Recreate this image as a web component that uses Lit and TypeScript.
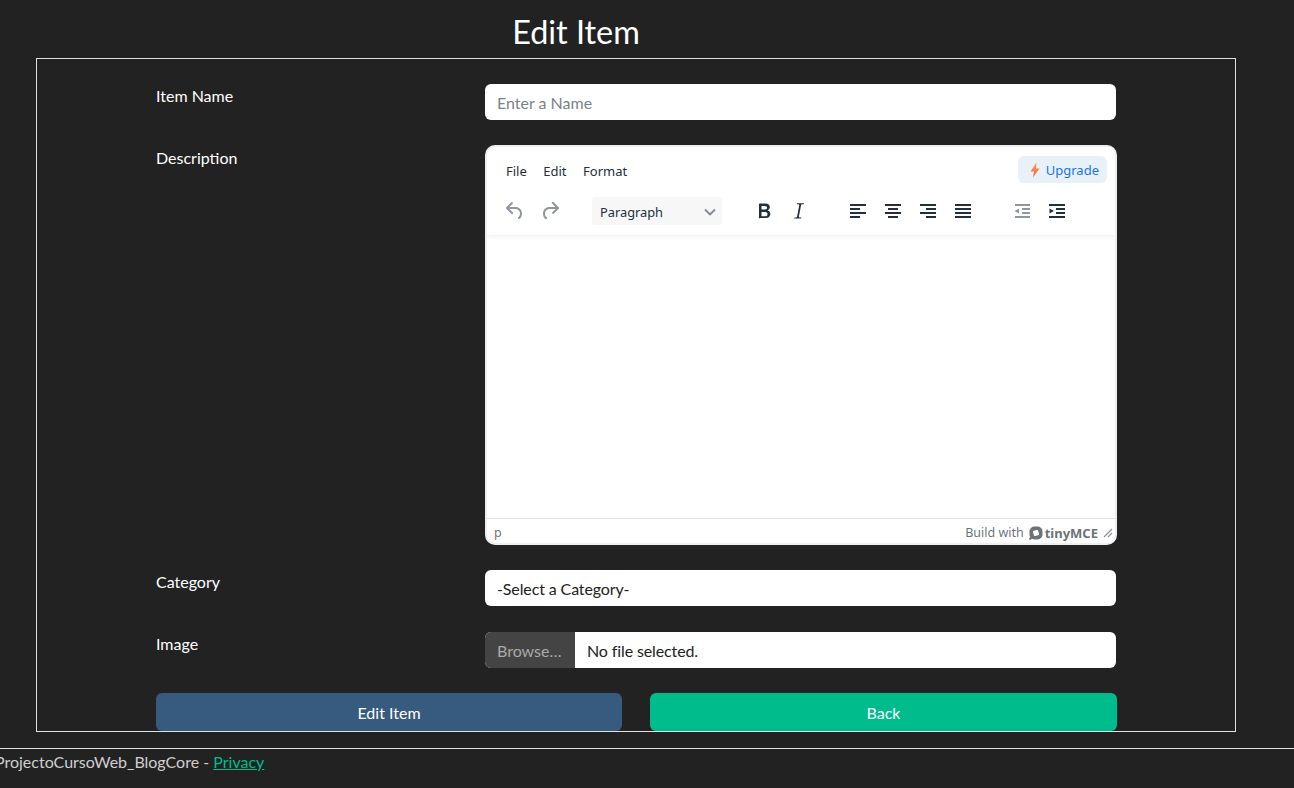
import { LitElement, html, css } from 'lit';
import { customElement } from 'lit/decorators.js';

const fontStack = css`Lato, 'Liberation Sans', sans-serif`;

@customElement('tiny-editor')
export class TinyEditor extends LitElement {
	static styles = css`
		:host {
			display: flex;
			flex-direction: column;
			height: 400px;
			margin-right: -1px;
			box-sizing: border-box;
			background: #fff;
			border: 2px solid #eee;
			border-radius: 10px;
			overflow: hidden;
			font-family: 'Noto Sans', sans-serif;
			color: #222f3e;
		}
		.header {
			display: flex;
			flex-direction: column;
			height: 88px;
			flex: none;
			box-sizing: border-box;
			box-shadow: 0 2px 4px rgba(34, 47, 62, 0.08);
			position: relative;
		}
		.menubar {
			display: flex;
			align-items: center;
			height: 48px;
			margin-bottom: 1px;
			padding: 0 8px 0 19px;
			gap: 16.5px;
			font-size: 13px;
		}
		.spacer {
			flex: 1;
		}
		.upgrade {
			display: flex;
			align-items: center;
			gap: 5px;
			height: 27px;
			margin-top: -3px;
			padding: 0 8px 0 11px;
			background: #e8f1f8;
			border-radius: 6px;
			color: #1a73e8;
			font-size: 13px;
		}
		.toolbar {
			display: flex;
			align-items: center;
			height: 30px;
			padding-left: 10px;
		}
		.tool {
			display: flex;
			width: 35px;
			justify-content: center;
			flex: none;
		}
		.tool svg {
			display: block;
			width: 24px;
			height: 24px;
		}
		.disabled {
			opacity: 0.5;
		}
		.select {
			display: flex;
			align-items: center;
			justify-content: space-between;
			box-sizing: border-box;
			width: 130px;
			height: 28px;
			margin: 0 24px 0 25px;
			padding: 1px 5px 0 8px;
			background: #f7f7f8;
			border-radius: 3px;
			font-size: 12.8px;
		}
		.group-gap {
			width: 24px;
			flex: none;
		}
		.content {
			flex: 1;
		}
		.status {
			display: flex;
			align-items: center;
			height: 25px;
			flex: none;
			box-sizing: border-box;
			border-top: 1px solid #e3e3e3;
			padding: 4px 2px 0 7px;
			font-size: 12.5px;
			color: rgba(34, 47, 62, 0.7);
		}
		.brand {
			display: flex;
			align-items: center;
			gap: 5px;
		}
		.logo {
			display: flex;
			align-items: center;
			gap: 2px;
			font-weight: 700;
			font-size: 13px;
			color: #6c7278;
		}
		.grip {
			margin-left: 5px;
		}
	`;

	render() {
		return html`
			<div class="header">
				<div class="menubar">
					<span>File</span><span>Edit</span><span>Format</span>
					<span class="spacer"></span>
					<div class="upgrade">
						<svg width="12" height="16" viewBox="0 0 12 16">
							<defs>
								<linearGradient id="bolt" x1="0" y1="0" x2="0" y2="1">
									<stop offset="0" stop-color="#f9a13c"></stop>
									<stop offset="1" stop-color="#f0625f"></stop>
								</linearGradient>
							</defs>
							<path d="M7.500 .5 1.500 9.500H5L4 15.500 10.500 6.500H7z" fill="url(#bolt)"></path>
						</svg>
						Upgrade
					</div>
				</div>
				<div class="toolbar">
					<div class="tool disabled">
						<svg viewBox="0 0 24 24"><path d="M6.400 8H12c3.700 0 6.200 2 6.800 5.100.6 2.700-.4 5.600-2.300 6.800a1 1 0 0 1-1-1.800c1.100-.7 1.800-2.700 1.400-4.600-.5-2.100-2.100-3.500-4.900-3.500H6.400l3.300 3.300a1 1 0 1 1-1.400 1.400l-5-5a1 1 0 0 1 0-1.400l5-5a1 1 0 0 1 1.400 1.400L6.400 8z" fill="#222f3e"></path></svg>
					</div>
					<div class="tool disabled">
						<svg viewBox="0 0 24 24"><path d="M17.600 10H12c-2.800 0-4.400 1.400-4.900 3.500-.4 2 .3 3.900 1.400 4.600a1 1 0 1 1-1 1.800c-2-1.200-2.900-4.100-2.300-6.800C5.800 10 8.300 8 12 8h5.600l-3.300-3.300a1 1 0 1 1 1.400-1.400l5 5a1 1 0 0 1 0 1.400l-5 5a1 1 0 0 1-1.400-1.400l3.300-3.300z" fill="#222f3e"></path></svg>
					</div>
					<div class="select">
						Paragraph
						<svg width="14" height="14" viewBox="0 0 14 14"><path d="M2 4.500 7 9.500 12 4.500" fill="none" stroke="#222f3e" stroke-opacity="0.55" stroke-width="1.800"></path></svg>
					</div>
					<div class="tool">
						<svg viewBox="0 0 24 24"><path d="M7.800 19.400c-.3 0-.5 0-.6-.2l-.2-.5V5.300c0-.2 0-.4.200-.5l.5-.2h5.300c1.500 0 2.800.3 3.600 1 .8.600 1.200 1.500 1.200 2.600a3 3 0 0 1-.6 1.900c-.4.600-1 1-1.700 1.300.5.100 1 .3 1.400.6s.8.700 1 1.200c.3.400.4 1 .4 1.600 0 1.300-.4 2.400-1.300 3.100-.9.700-2.200 1.100-3.800 1.100H7.800zm5-8.800c.7 0 1.300-.2 1.700-.5.400-.4.600-.8.600-1.400 0-.6-.2-1-.6-1.300-.4-.3-1-.5-1.700-.5H9.500v3.700h3.300zm.3 6.700c.8 0 1.400-.2 1.800-.6.400-.3.600-.8.600-1.500s-.2-1.200-.6-1.600c-.4-.4-1-.6-1.800-.6H9.500v4.300h3.600z" fill="#222f3e"></path></svg>
					</div>
					<div class="tool">
						<svg viewBox="0 0 24 24"><path d="M17 4.200l-.2 1h-1.400c-.4 0-.7.100-.9.300-.2.200-.4.500-.5.900l-2.100 11c0 .3 0 .6.200.8.200.2.500.3.900.3h1.300l-.1 1H7.200l.2-1h1.300c.4 0 .7-.1.900-.3.200-.2.400-.5.500-.8l2.100-11c.1-.4 0-.7-.2-.9-.2-.2-.5-.3-.9-.3h-1.300l.2-1H17z" fill="#222f3e"></path></svg>
					</div>
					<div class="group-gap"></div>
					<div class="tool">
						<svg viewBox="0 0 24 24"><path d="M4 5h16v2H4V5zm0 4h10v2H4V9zm0 4h16v2H4v-2zm0 4h10v2H4v-2z" fill="#222f3e"></path></svg>
					</div>
					<div class="tool">
						<svg viewBox="0 0 24 24"><path d="M4 5h16v2H4V5zm3 4h10v2H7V9zm-3 4h16v2H4v-2zm3 4h10v2H7v-2z" fill="#222f3e"></path></svg>
					</div>
					<div class="tool">
						<svg viewBox="0 0 24 24"><path d="M4 5h16v2H4V5zm6 4h10v2H10V9zm-6 4h16v2H4v-2zm6 4h10v2H10v-2z" fill="#222f3e"></path></svg>
					</div>
					<div class="tool">
						<svg viewBox="0 0 24 24"><path d="M4 5h16v2H4V5zm0 4h16v2H4V9zm0 4h16v2H4v-2zm0 4h16v2H4v-2z" fill="#222f3e"></path></svg>
					</div>
					<div class="group-gap"></div>
					<div class="tool disabled">
						<svg viewBox="0 0 24 24"><path d="M5 5h15v2H5V5zm7 4h8v2h-8V9zm0 4h8v2h-8v-2zm-7 4h15v2H5v-2zM9 9.500v5L4.500 12z" fill="#222f3e"></path></svg>
					</div>
					<div class="tool">
						<svg viewBox="0 0 24 24"><path d="M4 5h16v2H4V5zm7 4h9v2h-9V9zm0 4h9v2h-9v-2zm-7 4h16v2H4v-2zM4.500 9.500v5L9 12z" fill="#222f3e"></path></svg>
					</div>
				</div>
			</div>
			<div class="content"></div>
			<div class="status">
				<span>p</span>
				<span class="spacer"></span>
				<div class="brand">
					Build with
					<span class="logo">
						<svg width="14" height="14" viewBox="0 0 14 14">
							<rect x="0.500" y="0.500" width="13" height="13" rx="5" fill="#6c7278"></rect>
							<rect x="4.300" y="4.300" width="5.400" height="5.400" rx="1" transform="rotate(-15 7 7)" fill="#fff"></rect>
							<path d="M0.500 13.500 4 10" stroke="#6c7278" stroke-width="2"></path>
						</svg>
						tinyMCE
					</span>
				</div>
				<svg class="grip" width="10" height="10" viewBox="0 0 10 10">
					<path d="M9 1 1 9M9 5 5 9" stroke="#8b9097" stroke-width="1.200"></path>
				</svg>
			</div>
		`;
	}
}

@customElement('app-root')
export class AppRoot extends LitElement {
	static styles = css`
		:host {
			display: block;
			height: 788px;
			overflow: hidden;
			background: #222;
			color: #fff;
			font-family: ${fontStack};
			font-size: 16px;
			line-height: 24px;
		}
		.title {
			width: 1152px;
			margin: 0;
			height: 58px;
			padding-top: 8px;
			box-sizing: border-box;
			text-align: center;
			font-size: 32.4px;
			line-height: 48px;
			font-weight: 400;
		}
		.box {
			box-sizing: border-box;
			width: 1200px;
			height: 674px;
			margin-left: 36px;
			border: 1px solid #dee2e6;
			padding: 25px 119px 0;
		}
		.row {
			display: grid;
			grid-template-columns: 329px 631px;
			margin-bottom: 25px;
		}
		.row.tall-gap {
			margin-bottom: 26px;
		}
		.label-low {
			padding-top: 1px;
		}
		.control {
			display: flex;
			align-items: center;
			box-sizing: border-box;
			height: 36px;
			padding: 1px 12px 0;
			background: #fff;
			border-radius: 6px;
			color: #222;
		}
		.placeholder {
			color: #7b8288;
		}
		.tight {
			letter-spacing: -0.12px;
		}
		.file {
			padding: 0;
			overflow: hidden;
		}
		.browse {
			display: flex;
			align-items: center;
			box-sizing: border-box;
			width: 90px;
			height: 100%;
			padding: 1px 0 0 12px;
			background: #444;
			color: #aaa;
		}
		.file-name {
			padding: 1px 0 0 12px;
		}
		.actions {
			display: grid;
			grid-template-columns: 466px 467px;
			gap: 28px;
		}
		.btn {
			height: 38px;
			border: 1px solid transparent;
			border-radius: 6px;
			color: #fff;
			font: inherit;
			padding: 2px 0 0;
		}
		.primary {
			background: #375a7f;
		}
		.success {
			background: #00bc8c;
		}
		footer {
			margin-top: 16px;
			border-top: 1px solid #dee2e6;
			color: #cfcfcf;
			line-height: 26px;
			margin-left: -5px;
			white-space: nowrap;
		}
		footer a {
			color: #00bc8c;
		}
	`;

	render() {
		return html`
			<h1 class="title">Edit Item</h1>
			<div class="box">
				<div class="row">
					<label>Item Name</label>
					<div class="control"><span class="placeholder">Enter a Name</span></div>
				</div>
				<div class="row">
					<label class="label-low">Description</label>
					<tiny-editor></tiny-editor>
				</div>
				<div class="row tall-gap">
					<label>Category</label>
					<div class="control"><span class="tight">-Select a Category-</span></div>
				</div>
				<div class="row">
					<label>Image</label>
					<div class="control file">
						<span class="browse">Browse…</span>
						<span class="file-name tight">No file selected.</span>
					</div>
				</div>
				<div class="actions">
					<button class="btn primary">Edit Item</button>
					<button class="btn success">Back</button>
				</div>
			</div>
			<footer>ProjectoCursoWeb_BlogCore - <a href="#">Privacy</a></footer>
		`;
	}
}
